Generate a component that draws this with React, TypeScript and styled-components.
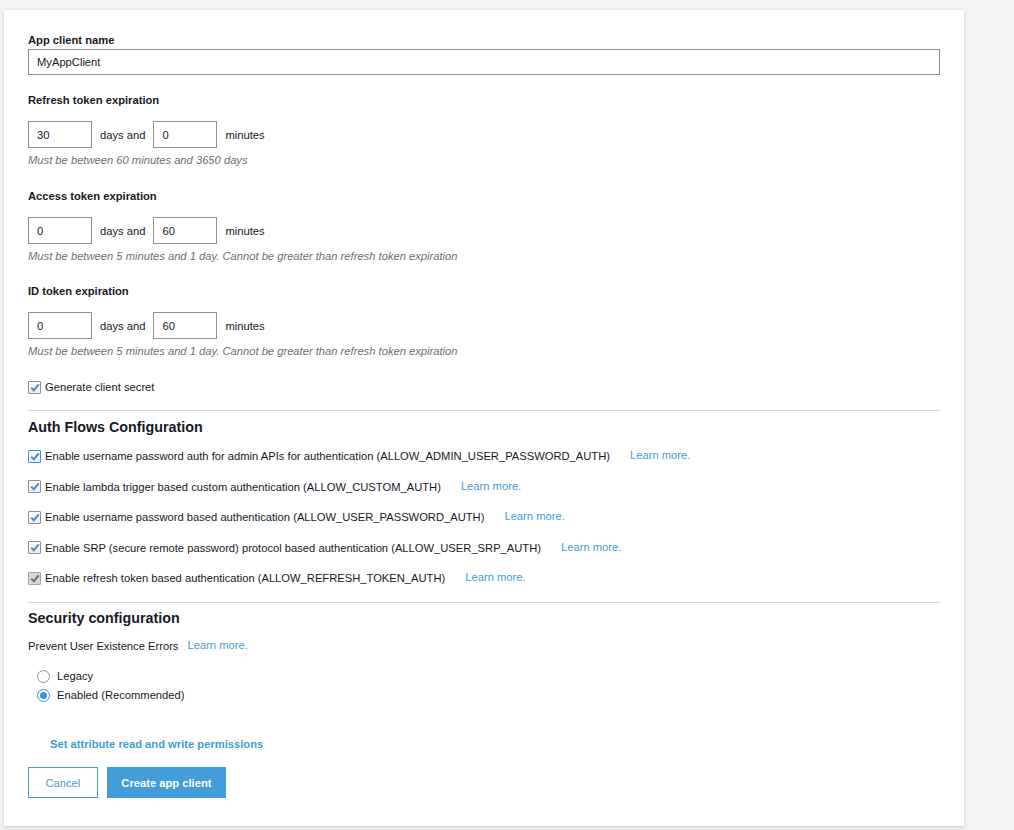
import React, { useState } from 'react';
import styled, { createGlobalStyle } from 'styled-components';

const GlobalStyle = createGlobalStyle`
  html, body {
    margin: 0;
    padding: 0;
    background: #f2f3f3;
    font-family: "Liberation Sans", Arial, sans-serif;
    font-size: 11.2px;
    color: #16191f;
  }
`;

const BLUE = '#449cd8';

const Page = styled.div`
  padding: 10px 0 4px 4px;
`;

const Card = styled.div`
  width: 960px;
  box-sizing: border-box;
  background: #fff;
  box-shadow: 0 1px 3px rgba(0, 0, 0, 0.18);
  padding: 23px 24px 28px 24px;
  display: flex;
  flex-direction: column;
`;

const Label = styled.div<{ $top?: number }>`
  font-weight: bold;
  line-height: 14px;
  margin-top: ${(p) => p.$top ?? 0}px;
`;

const NameInput = styled.input`
  margin-top: 2px;
  height: 26px;
  box-sizing: border-box;
  width: 100%;
  border: 1px solid #8d9191;
  padding: 0 8px;
  font-family: inherit;
  font-size: 11.2px;
  color: #16191f;
  outline: none;
`;

const ExpiryRow = styled.div`
  margin-top: 14px;
  display: flex;
  align-items: center;
  gap: 8px;
  line-height: 14px;
`;

const SmallInput = styled.input`
  width: 64px;
  height: 27px;
  box-sizing: border-box;
  border: 1px solid #8d9191;
  padding: 0 8px;
  font-family: inherit;
  font-size: 11.2px;
  color: #16191f;
  outline: none;
`;

const Hint = styled.div`
  margin-top: 5px;
  font-style: italic;
  color: #687078;
  line-height: 14px;
`;

const CheckRow = styled.label<{ $top: number }>`
  display: flex;
  align-items: center;
  line-height: 14px;
  margin-top: ${(p) => p.$top}px;
  white-space: nowrap;
`;

const Box = styled.span<{ $focus?: boolean; $disabled?: boolean }>`
  width: 13px;
  height: 13px;
  box-sizing: border-box;
  border: 1px solid ${(p) => (p.$focus ? '#3d8fe0' : p.$disabled ? '#a3a3a3' : '#8f8f8f')};
  background: ${(p) => (p.$disabled ? '#d8d8d8' : 'linear-gradient(#fdfdfd, #ececec)')};
  border-radius: 1px;
  display: flex;
  align-items: center;
  justify-content: center;
  margin-right: 4px;
  flex-shrink: 0;
`;

const LearnMore = styled.a<{ $gap?: number }>`
  color: ${BLUE};
  text-decoration: none;
  margin-left: ${(p) => p.$gap ?? 20}px;
  position: relative;
  top: -1px;
`;

const Divider = styled.hr<{ $top: number }>`
  border: none;
  border-top: 1px solid #d5dbdb;
  margin: ${(p) => p.$top}px 0 0 0;
  height: 0;
`;

const Heading = styled.h3<{ $top: number }>`
  margin: ${(p) => p.$top}px 0 0 0;
  font-size: 14.3px;
  line-height: 18px;
  font-weight: bold;
  color: #16191f;
`;

const PlainRow = styled.div`
  margin-top: 12px;
  line-height: 14px;
  display: flex;
`;

const RadioGroup = styled.div`
  margin-top: 16px;
  padding-left: 9px;
  display: flex;
  flex-direction: column;
  gap: 5px;
`;

const RadioRow = styled.label`
  display: flex;
  align-items: center;
  line-height: 14px;
  cursor: pointer;
`;

const Circle = styled.span<{ $on: boolean }>`
  width: 13px;
  height: 13px;
  box-sizing: border-box;
  border-radius: 50%;
  border: 1px solid ${(p) => (p.$on ? '#3d8fe0' : '#8f8f8f')};
  background: #fff;
  display: flex;
  align-items: center;
  justify-content: center;
  margin-right: 7px;
  &::after {
    content: '';
    display: ${(p) => (p.$on ? 'block' : 'none')};
    width: 7px;
    height: 7px;
    border-radius: 50%;
    background: #3d8fe0;
  }
`;

const AttrLink = styled.a`
  margin-top: 35px;
  padding-left: 22px;
  line-height: 14px;
  font-weight: bold;
  color: ${BLUE};
  text-decoration: none;
`;

const Buttons = styled.div`
  margin-top: 16px;
  display: flex;
  gap: 9px;
`;

const Button = styled.button<{ $primary?: boolean }>`
  height: 31px;
  box-sizing: border-box;
  padding: 0 ${(p) => (p.$primary ? 13.5 : 16.5)}px;
  border: 1px solid ${BLUE};
  background: ${(p) => (p.$primary ? BLUE : '#fff')};
  color: ${(p) => (p.$primary ? '#fff' : BLUE)};
  font-family: inherit;
  font-size: 11.2px;
  font-weight: ${(p) => (p.$primary ? 'bold' : 'normal')};
  cursor: pointer;
`;

const Tick = ({ color }: { color: string }) => (
  <svg width="10" height="9" viewBox="0 0 10 9">
    <path d="M1.2 4.6 L3.8 7.2 L8.8 1.4" fill="none" stroke={color} strokeWidth="2" />
  </svg>
);

interface CheckProps {
  top: number;
  text: string;
  link?: boolean;
  focus?: boolean;
  disabled?: boolean;
}

const Check = ({ top, text, link, focus, disabled }: CheckProps) => (
  <CheckRow $top={top}>
    <Box $focus={focus} $disabled={disabled}>
      <Tick color={disabled ? '#6f6f6f' : '#3d8fd8'} />
    </Box>
    {text}
    {link && <LearnMore href="#">Learn more.</LearnMore>}
  </CheckRow>
);

const expiries = [
  { label: 'Refresh token expiration', days: '30', mins: '0', hint: 'Must be between 60 minutes and 3650 days', top: 18 },
  {
    label: 'Access token expiration',
    days: '0',
    mins: '60',
    hint: 'Must be between 5 minutes and 1 day. Cannot be greater than refresh token expiration',
    top: 22,
  },
  {
    label: 'ID token expiration',
    days: '0',
    mins: '60',
    hint: 'Must be between 5 minutes and 1 day. Cannot be greater than refresh token expiration',
    top: 21,
  },
];

const flows = [
  'Enable username password auth for admin APIs for authentication (ALLOW_ADMIN_USER_PASSWORD_AUTH)',
  'Enable lambda trigger based custom authentication (ALLOW_CUSTOM_AUTH)',
  'Enable username password based authentication (ALLOW_USER_PASSWORD_AUTH)',
  'Enable SRP (secure remote password) protocol based authentication (ALLOW_USER_SRP_AUTH)',
  'Enable refresh token based authentication (ALLOW_REFRESH_TOKEN_AUTH)',
];

export default function App() {
  const [mode, setMode] = useState('enabled');

  return (
    <>
      <GlobalStyle />
      <Page>
        <Card>
          <Label>App client name</Label>
          <NameInput defaultValue="MyAppClient" />

          {expiries.map((e) => (
            <React.Fragment key={e.label}>
              <Label $top={e.top}>{e.label}</Label>
              <ExpiryRow>
                <SmallInput defaultValue={e.days} />
                <span>days and</span>
                <SmallInput defaultValue={e.mins} />
                <span>minutes</span>
              </ExpiryRow>
              <Hint>{e.hint}</Hint>
            </React.Fragment>
          ))}

          <Check top={22} text="Generate client secret" />

          <Divider $top={16} />
          <Heading $top={7}>Auth Flows Configuration</Heading>
          {flows.map((f, i) => (
            <Check
              key={f}
              top={i === 0 ? 13 : 16.5}
              text={f}
              link
              focus={i === 0}
              disabled={i === flows.length - 1}
            />
          ))}

          <Divider $top={17} />
          <Heading $top={6}>Security configuration</Heading>
          <PlainRow>
            Prevent User Existence Errors
            <LearnMore href="#" $gap={9}>
              Learn more.
            </LearnMore>
          </PlainRow>
          <RadioGroup>
            <RadioRow onClick={() => setMode('legacy')}>
              <Circle $on={mode === 'legacy'} />
              Legacy
            </RadioRow>
            <RadioRow onClick={() => setMode('enabled')}>
              <Circle $on={mode === 'enabled'} />
              Enabled (Recommended)
            </RadioRow>
          </RadioGroup>

          <AttrLink href="#">Set attribute read and write permissions</AttrLink>
          <Buttons>
            <Button>Cancel</Button>
            <Button $primary>Create app client</Button>
          </Buttons>
        </Card>
      </Page>
    </>
  );
}
